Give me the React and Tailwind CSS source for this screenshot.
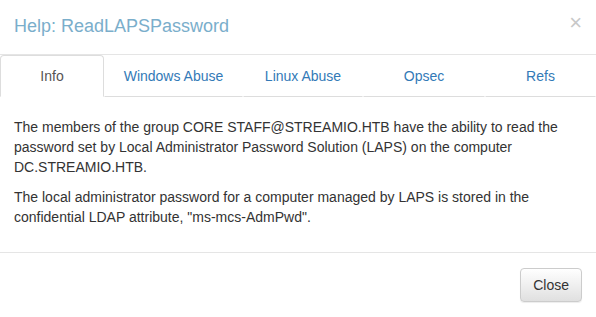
import React from "react";

export default function App() {
  const tabs = ["Info", "Windows Abuse", "Linux Abuse", "Opsec", "Refs"];
  return (
    <div
      className="w-[596px] h-[317px] bg-white text-[14px] text-[#333] overflow-hidden"
      style={{ fontFamily: '"Liberation Sans", Arial, sans-serif' }}
    >
      <div className="h-[55px] border-b border-[#e5e5e5] flex items-center justify-between pl-[14px] pr-[14px]">
        <h4 className="text-[18px] leading-[26px] text-[#7aaecb] mt-[-2px]">Help: ReadLAPSPassword</h4>
        <span className="text-[22px] font-normal text-[#c8c8c8] leading-none mt-[-9px]">×</span>
      </div>
      <div className="grid grid-cols-[104px_139px_120px_122px_1fr] h-[42px]">
        {tabs.map((t, i) =>
          i === 0 ? (
            <div
              key={t}
              className="flex items-center justify-center border border-[#ddd] border-b-white rounded-t-[4px] text-[#555] leading-[20px]"
            >
              {t}
            </div>
          ) : (
            <div
              key={t}
              className="flex items-center justify-center border border-transparent border-b-[#ddd] rounded-t-[4px] text-[#337ab7] leading-[20px]"
            >
              {t}
            </div>
          )
        )}
      </div>
      <div className="px-[14px] pt-[20px] pb-[15px] leading-[20px] border-b border-[#e5e5e5]">
        <p className="mb-[10px]">
          The members of the group CORE STAFF@STREAMIO.HTB have the ability to read the password set by Local Administrator Password Solution (LAPS) on the computer DC.STREAMIO.HTB.
        </p>
        <p className="mb-[10px]">
          The local administrator password for a computer managed by LAPS is stored in the confidential LDAP attribute, "ms-mcs-AdmPwd".
        </p>
      </div>
      <div className="flex justify-end pt-[15px] pr-[14px]">
        <button className="h-[34px] px-[12px] border border-[#ccc] rounded-[4px] bg-gradient-to-b from-white to-[#e0e0e0] text-[#333] text-[14px] leading-[20px] shadow-[inset_0_1px_0_rgba(255,255,255,0.15),0_1px_1px_rgba(0,0,0,0.075)]">
          Close
        </button>
      </div>
    </div>
  );
}
